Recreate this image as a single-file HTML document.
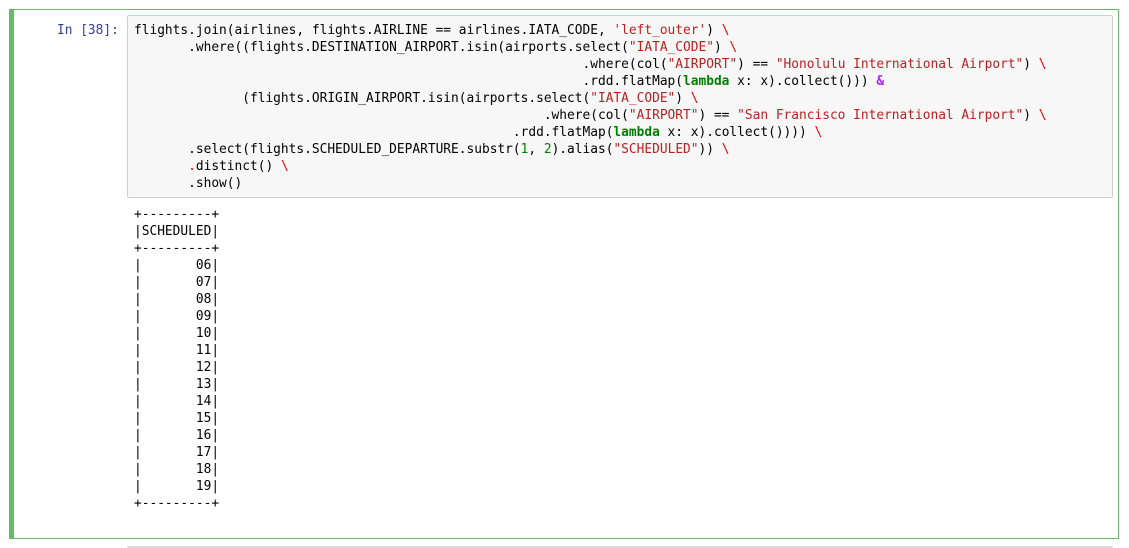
<!DOCTYPE html>
<html><head><style>
body{margin:0;width:1129px;height:548px;background:#fff;position:relative;overflow:hidden;font-family:"DejaVu Sans Mono","Liberation Mono",monospace;}
.cell{position:absolute;left:9px;top:9px;width:1104px;height:528px;border:1px solid #66bb6a;border-left:5px solid #66bb6a;}
.prompt{position:absolute;left:57px;top:22px;font-size:12.85px;color:#303f9f;line-height:17px;}
.inp{position:absolute;left:127px;top:15px;width:984px;height:181px;background:#f7f7f7;border:1px solid #cfcfcf;border-radius:2px;}
pre{margin:0;font-family:inherit;font-size:12.85px;line-height:17px;color:#000;white-space:pre;}
.code{position:absolute;left:134px;top:22px;}
.out{position:absolute;left:134px;top:206px;}
.s{color:#ba2121}.k{color:#008000;font-weight:bold}.o{color:#aa22ff;font-weight:bold}.n{color:#008000}.r{color:#e00}
.sep{position:absolute;left:127px;top:546px;width:986px;height:2px;background:#ddd;}
</style></head><body>
<div class="cell"></div>
<div class="prompt">In [38]:</div>
<div class="inp"></div>
<pre class="code">flights.join(airlines, flights.AIRLINE == airlines.IATA_CODE, <span class="s">'left_outer'</span>) <span class="r">\</span>
       .where((flights.DESTINATION_AIRPORT.isin(airports.select(<span class="s">"IATA_CODE"</span>) <span class="r">\</span>
                                                          .where(col(<span class="s">"AIRPORT"</span>) == <span class="s">"Honolulu International Airport"</span>) <span class="r">\</span>
                                                          .rdd.flatMap(<span class="k">lambda</span> x: x).collect())) <span class="o">&amp;</span>
              (flights.ORIGIN_AIRPORT.isin(airports.select(<span class="s">"IATA_CODE"</span>) <span class="r">\</span>
                                                     .where(col(<span class="s">"AIRPORT"</span>) == <span class="s">"San Francisco International Airport"</span>) <span class="r">\</span>
                                                 .rdd.flatMap(<span class="k">lambda</span> x: x).collect()))) <span class="r">\</span>
       .select(flights.SCHEDULED_DEPARTURE.substr(<span class="n">1</span>, <span class="n">2</span>).alias(<span class="s">"SCHEDULED"</span>)) <span class="r">\</span>
       <span class="r">.</span>distinct() <span class="r">\</span>
       .show()</pre>
<pre class="out">+---------+
|SCHEDULED|
+---------+
|       06|
|       07|
|       08|
|       09|
|       10|
|       11|
|       12|
|       13|
|       14|
|       15|
|       16|
|       17|
|       18|
|       19|
+---------+</pre>
<div class="sep"></div>
</body></html>
